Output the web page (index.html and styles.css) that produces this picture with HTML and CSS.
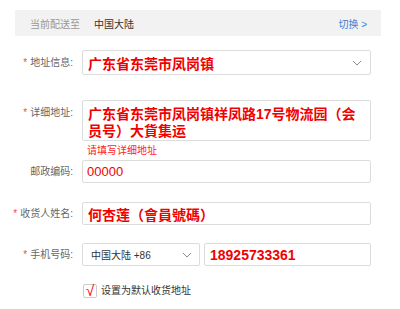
FILE: index.html
```html
<!DOCTYPE html>
<html>
<head>
  <meta charset="UTF-8">
  <title>收货地址</title>
  <link rel="stylesheet" href="styles.css">
</head>
<body>

  <div class="page">
    <div class="ship-bar">
      <span class="ship-label">当前配送至</span>
      <span class="ship-region">中国大陆</span>
      <span class="ship-switch">切换 &gt;</span>
    </div>

    <div class="row">
      <div class="field-label"><i>*</i>地址信息:</div>
      <div class="field select value">
        <span>广东省东莞市凤岗镇</span>
        <svg class="chevron" width="10" height="6" viewBox="0 0 10 6"><path d="M1 1l4 4 4-4" fill="none" stroke="#8a8a8a" stroke-width="1"/></svg>
      </div>
    </div>

    <div class="row row-top">
      <div class="field-label"><i>*</i>详细地址:</div>
      <div class="field area value">广东省东莞市凤岗镇祥凤路17号物流园（会员号）大貨集运</div>
    </div>
    <div class="error-tip">请填写详细地址</div>

    <div class="row row-zip">
      <div class="field-label">邮政编码:</div>
      <div class="field zip">00000</div>
    </div>

    <div class="row row-name">
      <div class="field-label"><i>*</i>收货人姓名:</div>
      <div class="field value">何杏莲（會員號碼）</div>
    </div>

    <div class="row row-phone">
      <div class="field-label"><i>*</i>手机号码:</div>
      <div class="field select code">
        <span>中国大陆 +86</span>
        <svg class="chevron" width="10" height="6" viewBox="0 0 10 6"><path d="M1 1l4 4 4-4" fill="none" stroke="#8a8a8a" stroke-width="1"/></svg>
      </div>
      <div class="field phone value">18925733361</div>
    </div>

    <div class="default-row">
      <span class="check">√</span>
      <span>设置为默认收货地址</span>
    </div>
  </div>

</body>
</html>
```

FILE: styles.css
```css
body { margin: 0; font-family: "Liberation Sans", "Noto Sans CJK SC", sans-serif; font-size: 10px; color: #333; background: #fff; }
.page { padding: 10px 0 0 5px; width: 376px; }

.ship-bar { display: flex; align-items: center; height: 26px; margin-left: 10px; padding: 0 14px 0 15px; background: #f2f2f2; }
.ship-label { color: #999; }
.ship-region { margin-left: 14px; color: #333; }
.ship-switch { margin-left: auto; color: #3d82d0; }

.row { display: flex; align-items: center; margin-top: 14px; }
.row-top { align-items: flex-start; margin-top: 25px; }
.row-top .field-label { padding-top: 7px; }
.row-zip { margin-top: 3px; }
.row-name { margin-top: 19px; }
.row-phone { margin-top: 18px; }

.field-label { width: 68px; flex-shrink: 0; margin-right: 9px; text-align: right; white-space: nowrap; color: #666; line-height: 12px; }
.field-label i { font-style: normal; color: #f44; margin-right: 3px; }

.field { box-sizing: border-box; width: 289px; height: 23px; border: 1px solid #dcdcdc; border-radius: 2px; padding: 0 5px; display: flex; align-items: center; }
.value { color: #f20000; font-size: 14px; font-weight: bold; }
.select { height: 25px; justify-content: space-between; padding-right: 8px; }
.area { height: 41px; display: block; padding: 5px 5px 0; line-height: 17px; }
.zip { color: #f20000; font-size: 13px; padding-left: 4px; }

.error-tip { margin: 4px 0 0 82px; color: #f22; line-height: 12px; }

.code { width: 118px; height: 23px; font-size: 10px; font-weight: normal; color: #333; padding-left: 8px; padding-right: 7px; }
.phone { width: 167px; margin-left: 4px; }

.default-row { display: flex; align-items: center; margin: 18px 0 0 78px; line-height: 14px; }
.check { box-sizing: border-box; width: 14px; height: 14px; border: 1px solid #ccc; border-radius: 2px; margin-right: 4px; color: #f00; font-size: 15px; line-height: 12px; text-align: center; }
```
